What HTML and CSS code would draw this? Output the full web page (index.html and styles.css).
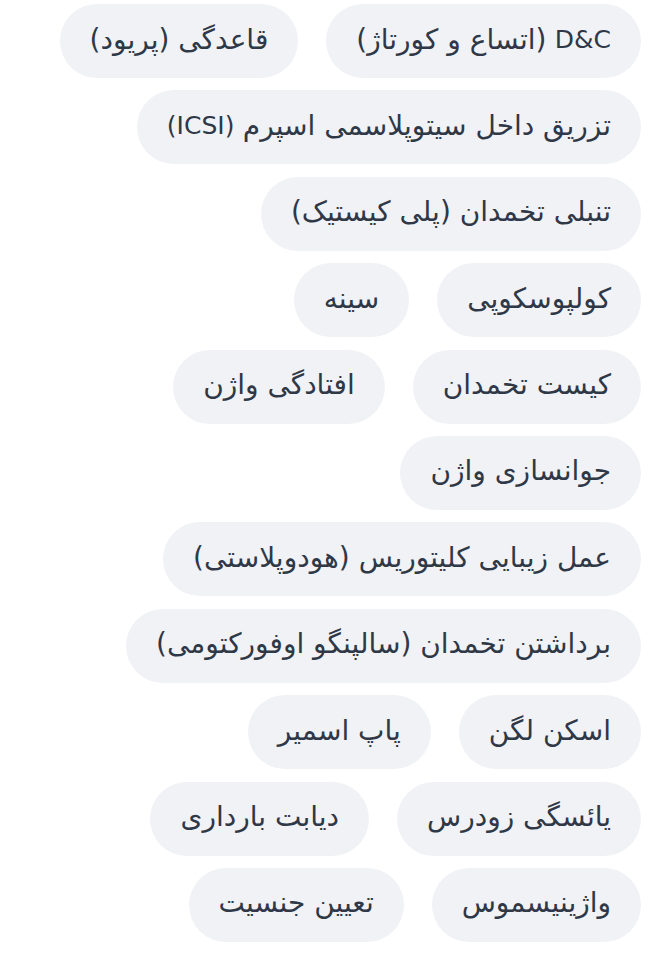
FILE: index.html
```html
<!DOCTYPE html>
<html lang="fa" dir="rtl">
<head>
<meta charset="utf-8">
<link rel="stylesheet" href="styles.css">
</head>
<body>
<div class="chips">
  <span class="chip"><span class="lat">D&amp;C</span> (اتساع و کورتاژ)</span>
  <span class="chip">قاعدگی (پریود)</span>
  <span class="chip">تزریق داخل سیتوپلاسمی اسپرم <span class="lat">(ICSI)</span></span>
  <span class="chip">تنبلی تخمدان (پلی کیستیک)</span>
  <span class="chip">کولپوسکوپی</span>
  <span class="chip">سینه</span>
  <span class="chip">کیست تخمدان</span>
  <span class="chip">افتادگی واژن</span>
  <span class="chip">جوانسازی واژن</span>
  <span class="chip">عمل زیبایی کلیتوریس (هودوپلاستی)</span>
  <span class="chip">برداشتن تخمدان (سالپنگو اوفورکتومی)</span>
  <span class="chip">اسکن لگن</span>
  <span class="chip">پاپ اسمیر</span>
  <span class="chip">یائسگی زودرس</span>
  <span class="chip">دیابت بارداری</span>
  <span class="chip">واژینیسموس</span>
  <span class="chip">تعیین جنسیت</span>
</div>
</body>
</html>
```

FILE: styles.css
```css
html, body {
  margin: 0;
  padding: 0;
  background: #ffffff;
}
body {
  font-family: "DejaVu Sans", "Noto Sans", sans-serif;
  color: #2f3846;
}
.chips {
  display: flex;
  flex-wrap: wrap;
  direction: rtl;
  gap: 12.4px 28px;
  padding: 4px 26px 0 40px;
}
.chip {
  display: flex;
  align-items: center;
  gap: 0.3em;
  height: 74px;
  padding: 0 30px 4px;
  border-radius: 37px;
  background: #f1f2f6;
  font-size: 28px;
  white-space: nowrap;
  box-sizing: border-box;
}
.lat {
  font-size: 25px;
}
```
